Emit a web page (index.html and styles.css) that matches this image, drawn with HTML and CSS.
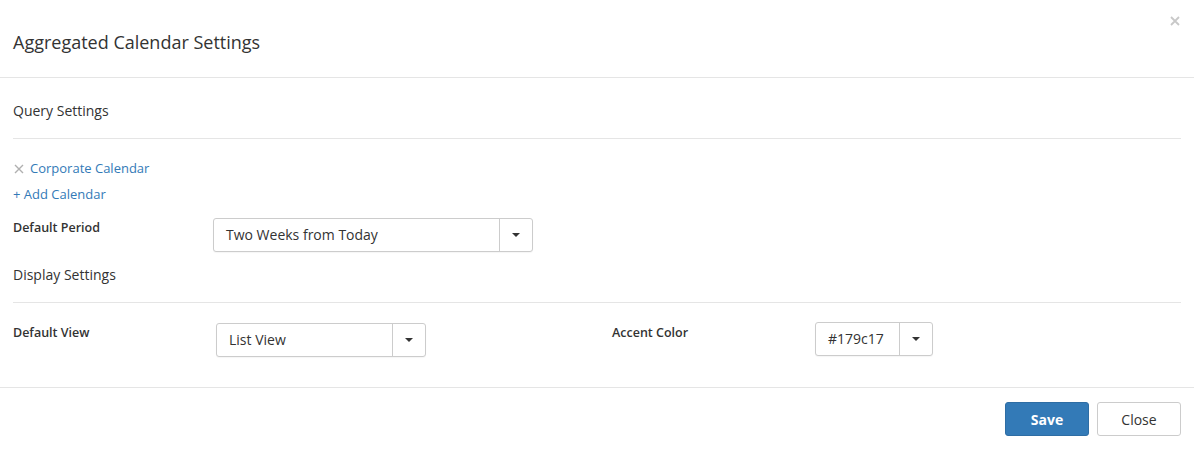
FILE: index.html
```html
<!DOCTYPE html>
<html>
<head>
<meta charset="utf-8">
<link rel="stylesheet" href="styles.css">
</head>
<body>
<div class="modal">
  <div class="modal-header">
    <h4 class="modal-title">Aggregated Calendar Settings</h4>
    <button class="close" aria-label="Close">
      <svg width="10" height="10" viewBox="0 0 10 10"><path d="M1 1L9 9M9 1L1 9" stroke="#c8c8c8" stroke-width="1.8" fill="none"/></svg>
    </button>
  </div>
  <div class="modal-body">
    <div class="section-title">Query Settings</div>
    <div class="calendar-list">
      <div class="cal-item">
        <svg class="remove" width="10" height="10" viewBox="0 0 10 10"><path d="M1 1L9 9M9 1L1 9" stroke="#b0b0b0" stroke-width="1.4" fill="none"/></svg>
        <a class="link">Corporate Calendar</a>
      </div>
      <div class="cal-item"><a class="link">+ Add Calendar</a></div>
    </div>
    <div class="form-row">
      <label class="label w200">Default Period</label>
      <div class="select w320">
        <span class="select-value">Two Weeks from Today</span>
        <span class="select-btn"><span class="caret"></span></span>
      </div>
    </div>
    <div class="section-title">Display Settings</div>
    <div class="form-row two-col">
      <div class="col col-left">
        <label class="label w203">Default View</label>
        <div class="select w210">
          <span class="select-value">List View</span>
          <span class="select-btn"><span class="caret"></span></span>
        </div>
      </div>
      <div class="col">
        <label class="label w203">Accent Color</label>
        <div class="select w118 up1">
          <span class="select-value">#179c17</span>
          <span class="select-btn"><span class="caret"></span></span>
        </div>
      </div>
    </div>
  </div>
  <div class="modal-footer">
    <button class="btn btn-primary">Save</button>
    <button class="btn btn-default">Close</button>
  </div>
</div>
</body>
</html>
```
FILE: styles.css
```css
* { box-sizing: border-box; }
html, body { margin: 0; padding: 0; background: #fff; }
body {
  font-family: "Open Sans", "Liberation Sans", sans-serif;
  color: #333;
  font-size: 14px;
}
.modal { position: relative; width: 1194px; }
.modal-header {
  height: 78px;
  padding: 29px 13px 0;
  border-bottom: 1px solid #e5e5e5;
}
.modal-title {
  margin: 0;
  font-size: 18px;
  font-weight: 400;
  line-height: 26px;
  color: #333;
}
.close {
  position: absolute;
  top: 16px;
  right: 14px;
  width: 10px;
  height: 10px;
  padding: 0;
  border: 0;
  background: none;
  display: flex;
}
.modal-body { padding: 0 13px 30px; }
.section-title {
  font-size: 14px;
  line-height: 22px;
  padding: 22px 0 16px;
  border-bottom: 1px solid #e5e5e5;
  color: #333;
}
.form-row + .section-title { padding-top: 12px; }
.calendar-list { padding-top: 16px; }
.cal-item {
  display: flex;
  align-items: center;
  height: 26px;
  font-size: 13px;
}
.link { color: #337ab7; text-decoration: none; }
.remove { margin: 1px 6px 0 1px; }
.form-row { display: flex; align-items: flex-start; margin-top: 11px; }
.two-col { margin-top: 20px; }
.col { display: flex; align-items: flex-start; }
.col-left { width: 599px; }
.label {
  font-size: 12.5px;
  font-weight: 600;
  line-height: 18px;
  padding-top: 1px;
  color: #333;
}
.w200 { width: 200px; }
.w203 { width: 203px; }
.w320 { width: 320px; }
.w210 { width: 210px; }
.w118 { width: 118px; }
.up1 { margin-top: -1px; }
.select {
  display: flex;
  height: 34px;
  border: 1px solid #ccc;
  border-radius: 3px;
  box-shadow: 0 1px 1px rgba(0,0,0,0.04);
  background: #fff;
}
.select-value {
  flex: 1;
  padding-left: 12px;
  line-height: 32px;
  font-size: 14px;
  color: #333;
  white-space: nowrap;
}
.select-btn {
  width: 33px;
  border-left: 1px solid #ccc;
  display: flex;
  align-items: center;
  justify-content: center;
}
.caret {
  width: 0;
  height: 0;
  border-left: 4px solid transparent;
  border-right: 4px solid transparent;
  border-top: 4px solid #333;
}
.modal-footer {
  border-top: 1px solid #e5e5e5;
  padding: 14px 13px 0;
  display: flex;
  justify-content: flex-end;
  gap: 8px;
}
.btn {
  width: 84px;
  height: 34px;
  border-radius: 3px;
  font-family: "Open Sans", "Liberation Sans", sans-serif;
  font-size: 14px;
  padding: 0;
}
.btn-primary {
  background: #337ab7;
  border: 1px solid #2e6da4;
  color: #fff;
  font-weight: 700;
}
.btn-default {
  background: #fff;
  border: 1px solid #ccc;
  color: #333;
}
```
